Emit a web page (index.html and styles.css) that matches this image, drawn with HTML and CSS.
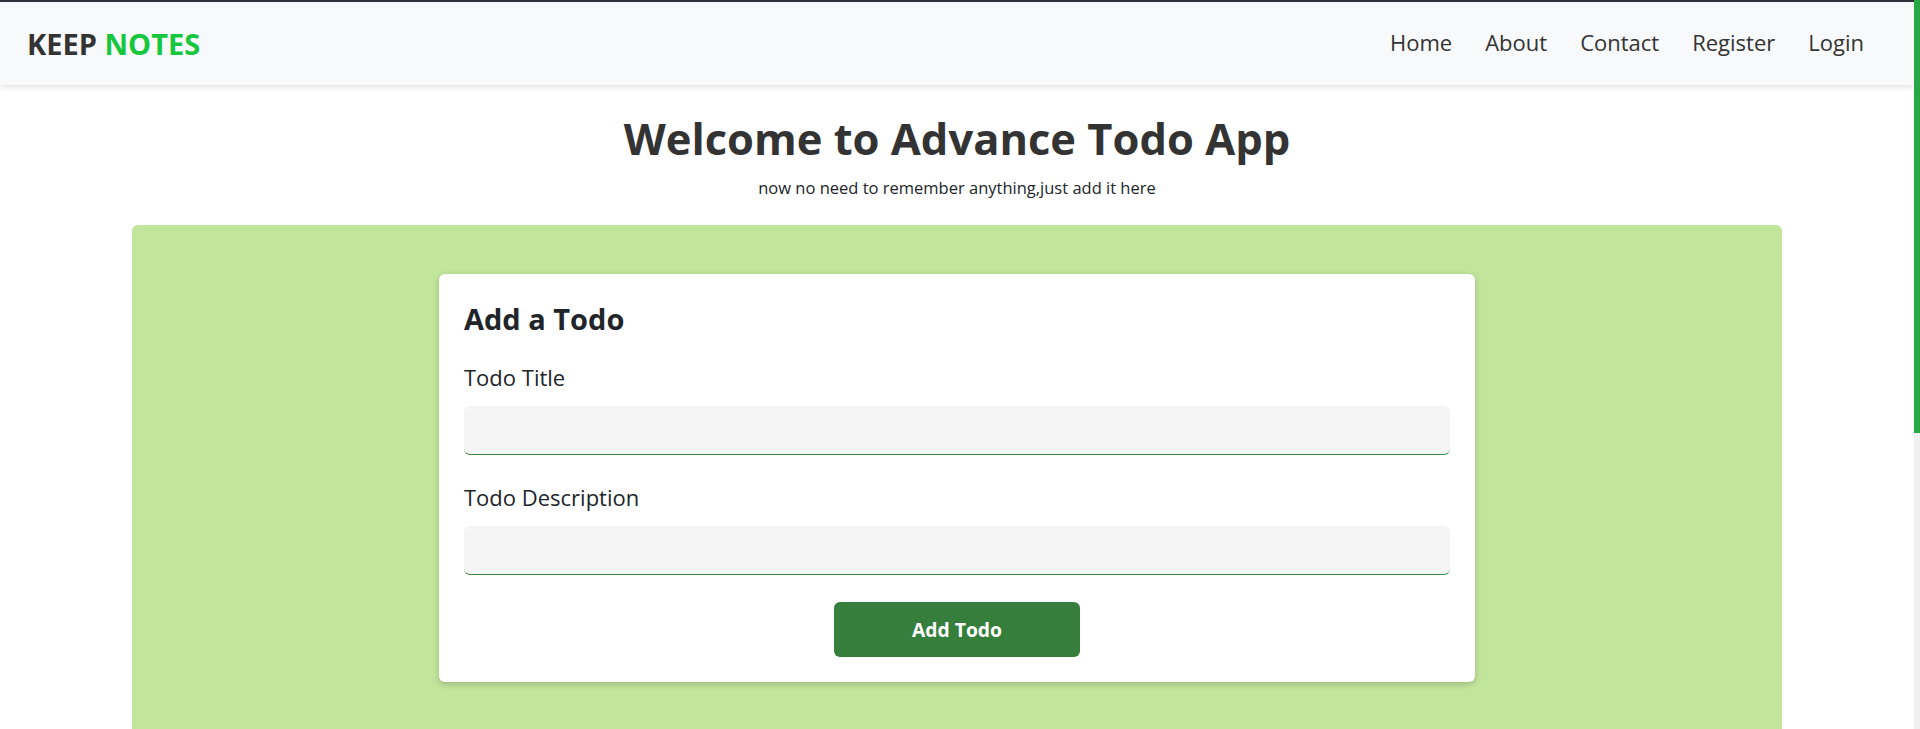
FILE: index.html
```html
<!DOCTYPE html>
<html lang="en">
<head>
<meta charset="utf-8">
<title>Keep Notes</title>
<link rel="stylesheet" href="styles.css">
</head>
<body>
  <div class="page">
    <nav class="navbar">
      <a class="brand" href="#">KEEP <span class="brand-accent">NOTES</span></a>
      <ul class="nav-links">
        <li><a href="#">Home</a></li>
        <li><a href="#">About</a></li>
        <li><a href="#">Contact</a></li>
        <li><a href="#">Register</a></li>
        <li><a href="#">Login</a></li>
      </ul>
    </nav>
    <header class="hero">
      <h1 class="hero-title">Welcome to Advance Todo App</h1>
      <p class="hero-sub">now no need to remember anything,just add it here</p>
    </header>
    <main class="panel">
      <form class="card">
        <h2 class="card-title">Add a Todo</h2>
        <div class="field">
          <label class="field-label" for="title">Todo Title</label>
          <input class="field-input" id="title" type="text">
        </div>
        <div class="field">
          <label class="field-label" for="desc">Todo Description</label>
          <input class="field-input" id="desc" type="text">
        </div>
        <div class="actions">
          <button class="btn" type="button">Add Todo</button>
        </div>
      </form>
    </main>
  </div>
  <div class="scrollbar"><div class="scrollbar-thumb"></div></div>
</body>
</html>
```

FILE: styles.css
```css
html, body {
  margin: 0;
  padding: 0;
  height: 100%;
  overflow: hidden;
}
body {
  display: flex;
  font-family: "Open Sans", "Noto Sans", sans-serif;
  color: #212529;
  background: #fff;
}
.page {
  flex: 1;
  min-width: 0;
  overflow: hidden;
}
.scrollbar {
  width: 6px;
  background: #f1f1f1;
  display: flex;
  flex-direction: column;
}
.scrollbar-thumb {
  height: 433px;
  background: #28a745;
}

.navbar {
  display: flex;
  align-items: center;
  justify-content: space-between;
  height: 83px;
  border-top: 2px solid #2c303b;
  background: #f8f9fa;
  box-shadow: 0 2px 6px rgba(0, 0, 0, 0.12);
  padding: 0 33.5px 0 27px;
  position: relative;
  z-index: 1;
}
.brand {
  font-size: 29px;
  font-weight: 700;
  color: #333;
  text-decoration: none;
  line-height: 1;
}
.brand-accent {
  color: #14c73e;
}
.nav-links {
  display: flex;
  list-style: none;
  margin: 0;
  padding: 0 0 3px;
}
.nav-links a {
  display: block;
  padding: 0 16.5px;
  font-size: 22px;
  line-height: 30px;
  color: #333;
  text-decoration: none;
}

.hero {
  text-align: center;
  padding-top: 28px;
}
.hero-title {
  margin: 0;
  font-size: 43.5px;
  line-height: 52px;
  font-weight: 700;
  color: #333;
}
.hero-sub {
  margin: 12px 0 0;
  font-size: 16.5px;
  line-height: 22px;
  color: #212529;
}

.panel {
  margin: 26px 132px 0;
  height: 1002px;
  background: #c2e59c;
  border-radius: 6px;
  padding-top: 49px;
  box-sizing: border-box;
}
.card {
  width: 1036px;
  margin: 0 auto;
  box-sizing: border-box;
  background: #fff;
  border-radius: 6px;
  box-shadow: 0 2px 6px rgba(0, 0, 0, 0.2);
  padding: 28px 25px 25px;
}
.card-title {
  margin: 0 0 26px;
  font-size: 29px;
  line-height: 34px;
  font-weight: 700;
  color: #212529;
}
.field {
  display: flex;
  flex-direction: column;
  margin-bottom: 27px;
}
.field-label {
  font-size: 22px;
  line-height: 30px;
  margin-bottom: 14px;
}
.field-input {
  height: 49px;
  box-sizing: border-box;
  background: #f5f5f5;
  border: none;
  border-bottom: 1px solid #3b8a43;
  border-radius: 6px;
  font: inherit;
  padding: 0 12px;
}
.actions {
  display: flex;
  justify-content: center;
}
.btn {
  width: 246px;
  height: 55px;
  background: #367e3c;
  color: #fff;
  border: none;
  border-radius: 6px;
  font-family: inherit;
  font-size: 19.3px;
  font-weight: 700;
}
```
